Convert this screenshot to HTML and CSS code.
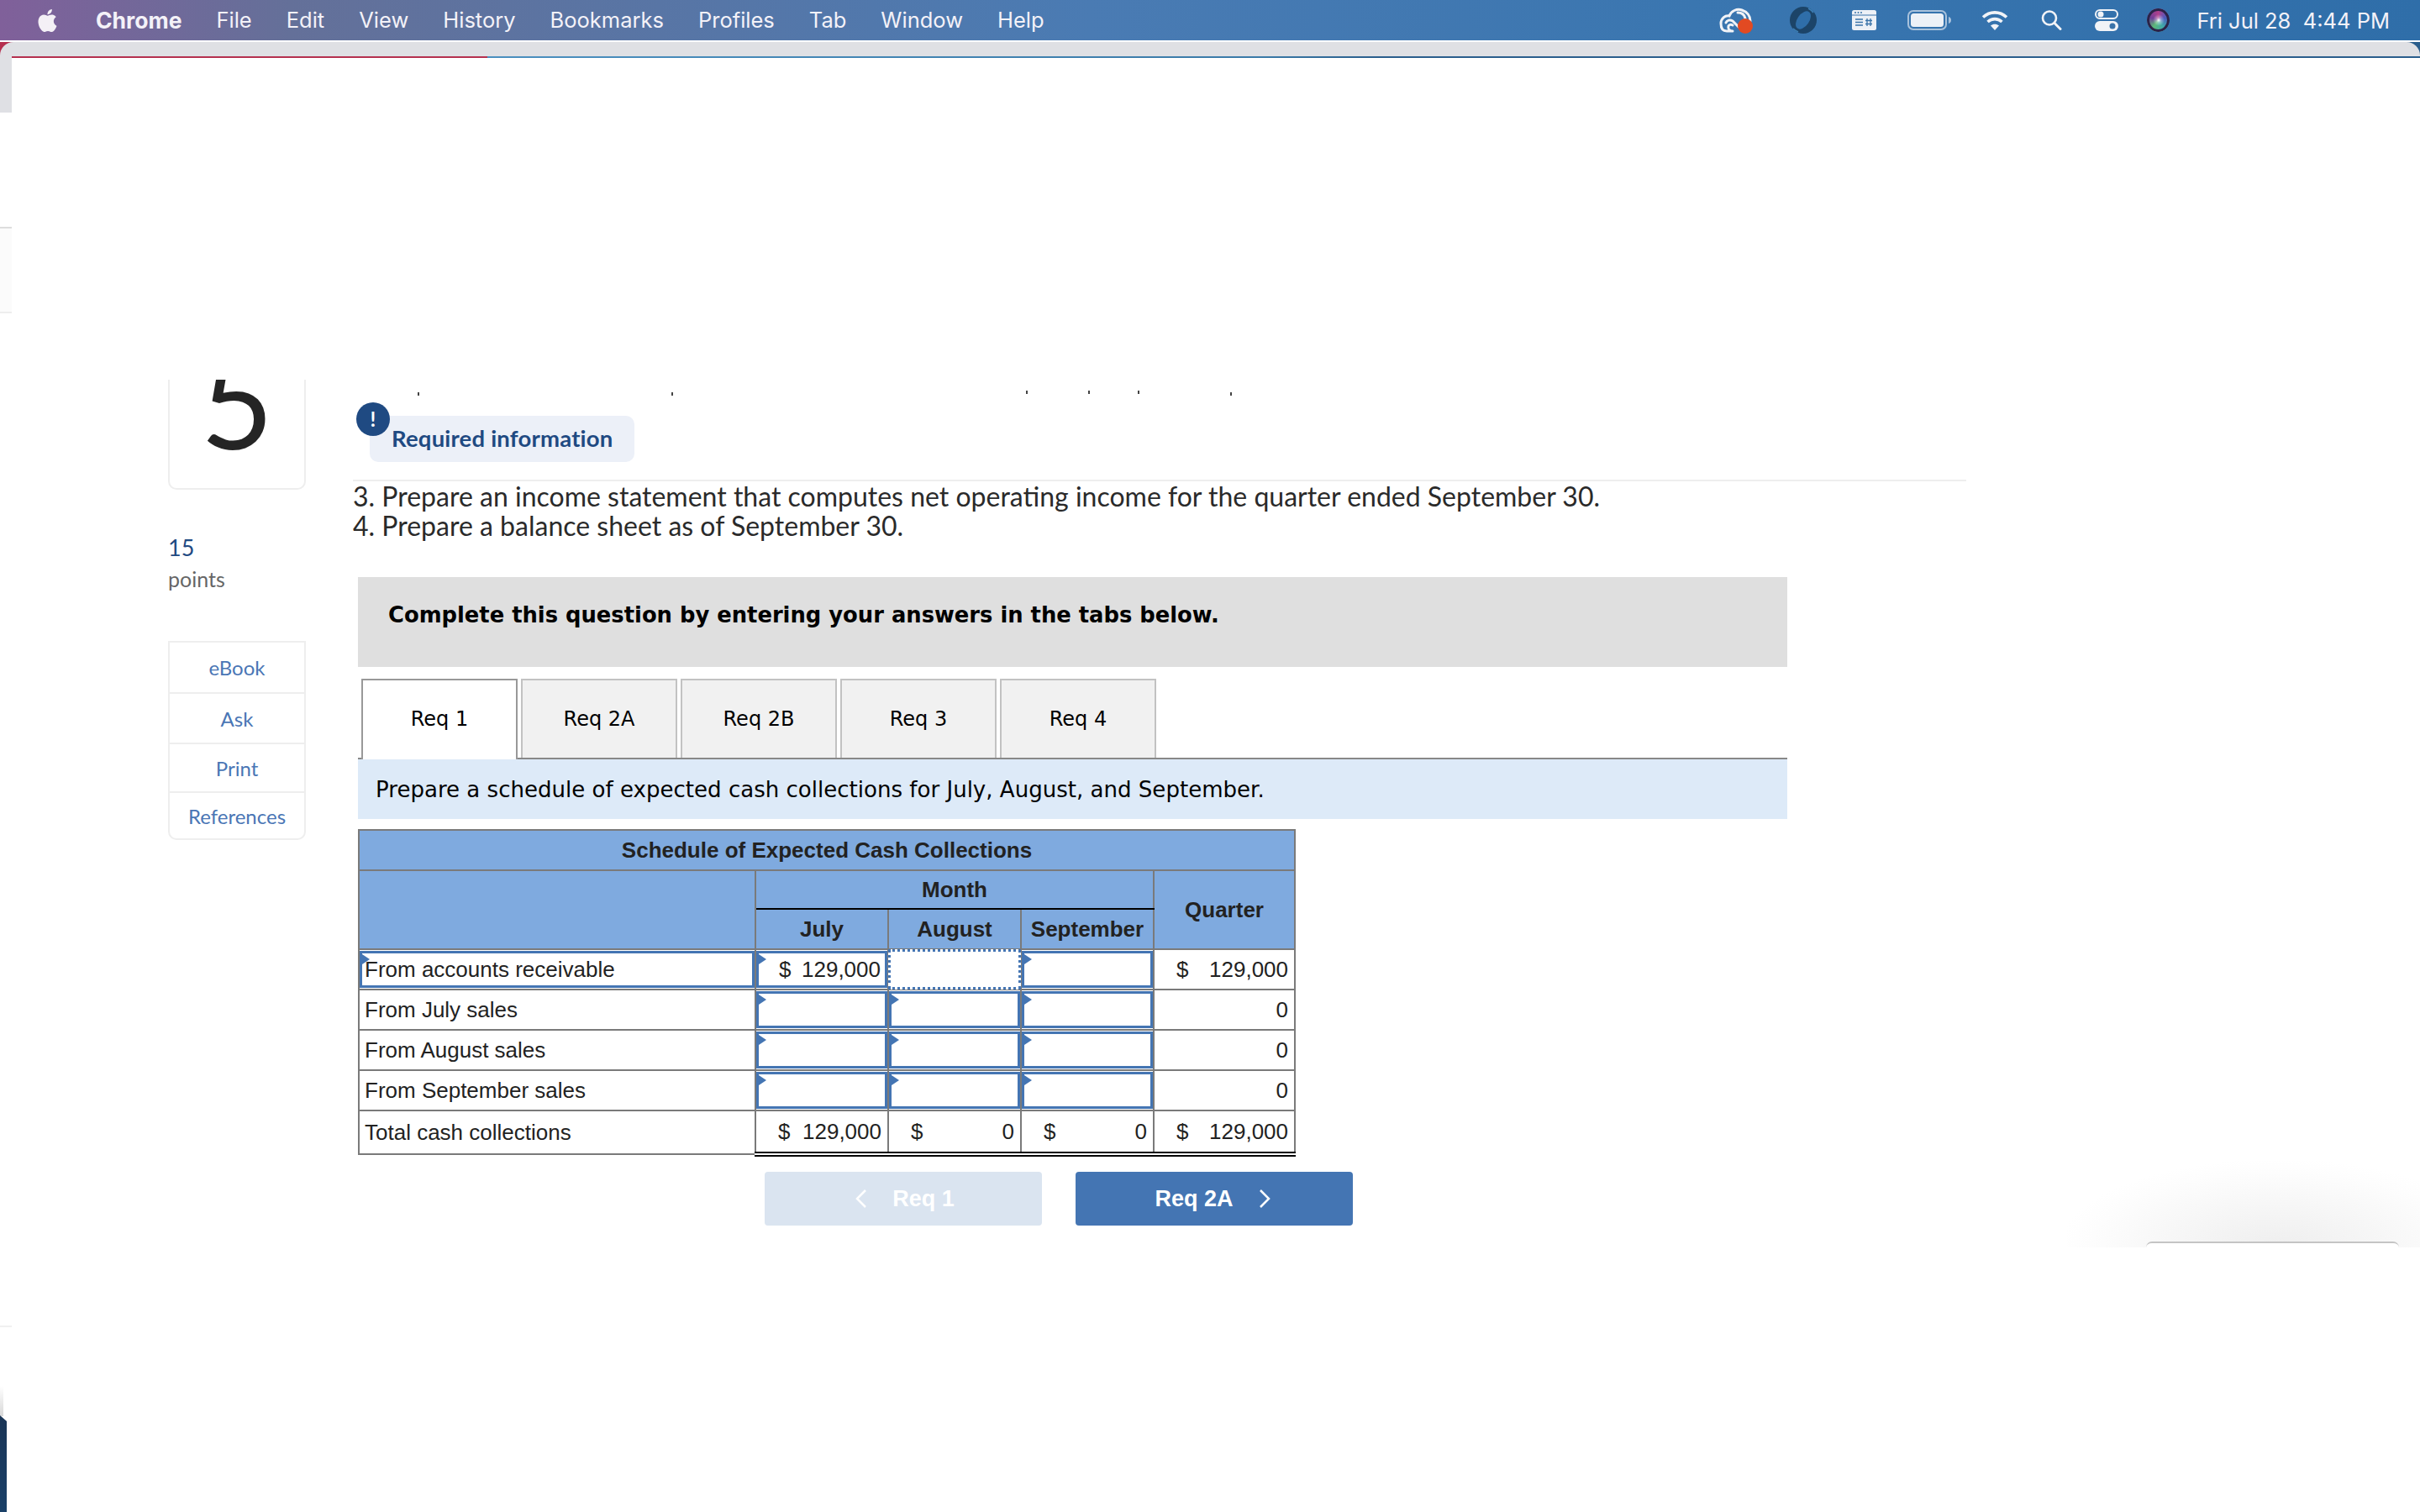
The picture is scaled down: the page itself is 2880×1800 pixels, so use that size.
FILE: index.html
```html
<!DOCTYPE html>
<html lang="en">

<head>
    <meta charset="UTF-8">
    <title>Required information</title>
    <link rel="stylesheet" href="styles.css">
</head>

<body>

    <!-- macOS menu bar -->
    <header class="menubar">
        <svg class="apple" viewBox="0 0 24 24"><path fill="#f4f0f6" d="M12.152 6.896c-.948 0-2.415-1.078-3.96-1.04-2.04.027-3.91 1.183-4.961 3.014-2.117 3.675-.546 9.103 1.519 12.09 1.013 1.454 2.208 3.09 3.792 3.039 1.52-.065 2.09-.987 3.935-.987 1.831 0 2.35.987 3.96.948 1.637-.026 2.676-1.48 3.676-2.948 1.156-1.688 1.636-3.325 1.662-3.415-.039-.013-3.182-1.221-3.22-4.857-.026-3.04 2.48-4.494 2.597-4.559-1.429-2.09-3.623-2.324-4.39-2.376-2-.156-3.675 1.09-4.61 1.09zM15.53 3.83c.843-1.012 1.4-2.427 1.245-3.83-1.207.052-2.662.805-3.532 1.818-.78.896-1.454 2.338-1.273 3.714 1.338.104 2.715-.688 3.559-1.701"/></svg>
        <nav class="menu">
            <span class="app-name">Chrome</span>
            <span>File</span>
            <span>Edit</span>
            <span>View</span>
            <span>History</span>
            <span>Bookmarks</span>
            <span>Profiles</span>
            <span>Tab</span>
            <span>Window</span>
            <span>Help</span>
        </nav>
        <div class="status">
            <svg class="ico-cloud" width="40" height="32" viewBox="0 0 40 32">
                <path fill="none" stroke="#f1f3f7" stroke-width="3" stroke-linecap="round" d="M14 29H9C4 29 2 25 2 20c0-6 5-10 10-9 2-6 9-9 15-7 6 2 10 7 10 13M8 19c1-3 5-4 8-2l7 7M16 29c-4 0-6-3-5-6 1-2 3-2 5-1M22 7c4 0 8 2 9 7"/>
                <circle cx="31" cy="23" r="9" fill="#e24a22"/>
            </svg>
            <svg class="ico-ring" width="32" height="32" viewBox="0 0 32 32">
                <circle cx="16" cy="16" r="16" fill="#1c4468"/>
                <ellipse cx="16" cy="16" rx="7" ry="12" transform="rotate(35 16 16)" fill="#2f6ea9"/>
                <path fill="none" stroke="#3d7fb5" stroke-width="1.500" d="M4 26C6 28 8 29 10 30M22 2c2 1 4 2 6 5"/>
            </svg>
            <svg class="ico-window" width="29" height="24" viewBox="0 0 29 24">
                <rect width="29" height="24" rx="2.5" fill="#edf1f7"/>
                <rect x="0" y="5.5" width="29" height="1" fill="#3a73a9"/>
                <circle cx="4" cy="3" r="1" fill="#3a73a9"/>
                <circle cx="7.5" cy="3" r="1" fill="#3a73a9"/>
                <circle cx="11" cy="3" r="1" fill="#3a73a9"/>
                <path stroke="#3a73a9" stroke-width="1.6" d="M4 11h9M4 14.5h9M4 18h9"/>
                <path fill="none" stroke="#3a73a9" stroke-width="1.3" d="M18 10v9M22 10v9M16 12.5h8M16 16.5h8"/>
            </svg>
            <svg class="ico-battery" width="52" height="24" viewBox="0 0 52 24">
                <rect x="1" y="1" width="45" height="22" rx="6" fill="none" stroke="#a9c2dc" stroke-width="2"/>
                <rect x="4" y="4" width="39" height="16" rx="3.5" fill="#edf1f7"/>
                <path fill="#a9c2dc" d="M49 8c2 .5 3 2 3 4s-1 3.500-3 4z"/>
            </svg>
            <svg class="ico-wifi" width="32" height="24" viewBox="0 0 32 24">
                <path fill="none" stroke="#f1f3f7" stroke-width="3.6" d="M2 8.500c8-7.500 20-7.500 28 0M7.500 14c5-4.500 12-4.500 17 0"/>
                <path fill="#f1f3f7" d="M11 18.500c3-2.500 7-2.500 10 0L16 24z"/>
            </svg>
            <svg class="ico-search" width="25" height="24" viewBox="0 0 25 24">
                <circle cx="10" cy="9.500" r="8" fill="none" stroke="#f1f3f7" stroke-width="2.6"/>
                <path stroke="#f1f3f7" stroke-width="3" stroke-linecap="round" d="M16 15.500l7 7"/>
            </svg>
            <svg class="ico-control" width="28" height="26" viewBox="0 0 28 26">
                <rect x="1" y="1" width="26" height="10" rx="5" fill="none" stroke="#f1f3f7" stroke-width="2"/>
                <circle cx="7" cy="6" r="3.500" fill="#f1f3f7"/>
                <rect x="0" y="14" width="28" height="12" rx="6" fill="#f1f3f7"/>
                <circle cx="21" cy="20" r="3.500" fill="#3a73a9"/>
            </svg>
            <div class="ico-siri"></div>
            <span class="clock">Fri Jul 28&nbsp;&nbsp;4:44 PM</span>
        </div>
    </header>

    <div class="chrome-top">
        <div class="chrome-strip"></div>
    </div>

    <!-- Bits of other windows at the screen edge -->
    <div class="edge edge-strip"></div>
    <div class="edge edge-box"></div>
    <div class="edge edge-line"></div>
    <div class="edge edge-fade"></div>
    <div class="edge edge-navy"></div>
    <div class="corner-shadow"><div class="corner-card"></div></div>

    <div class="page">

        <aside class="side">
            <div class="q-card"><span class="q-num">5</span></div>
            <div class="points-num">15</div>
            <div class="points-label">points</div>
            <ul class="side-links">
                <li class="link-ebook">eBook</li>
                <li class="link-ask">Ask</li>
                <li class="link-print">Print</li>
                <li class="link-refs">References</li>
            </ul>
        </aside>

        <main class="main">
            <div class="req-row">
                <div class="req-pill">
                    <span class="req-badge">!</span>
                    Required information
                </div>
            </div>

            <div class="steps">
                <p>3. Prepare an income statement that computes net operating income for the quarter ended September 30.</p>
                <p>4. Prepare a balance sheet as of September 30.</p>
            </div>

            <div class="work">
                <div class="notice">Complete this question by entering your answers in the tabs below.</div>

                <div class="tabs">
                    <div class="tab active">Req 1</div>
                    <div class="tab">Req 2A</div>
                    <div class="tab">Req 2B</div>
                    <div class="tab">Req 3</div>
                    <div class="tab">Req 4</div>
                </div>

                <div class="tab-intro">Prepare a schedule of expected cash collections for July, August, and September.</div>

                <table class="schedule">
                    <colgroup>
                        <col class="col-label">
                        <col class="col-month">
                        <col class="col-month">
                        <col class="col-month">
                        <col class="col-quarter">
                    </colgroup>
                    <thead>
                        <tr class="head-title">
                            <th colspan="5">Schedule of Expected Cash Collections</th>
                        </tr>
                        <tr class="head-month">
                            <th rowspan="2"></th>
                            <th colspan="3" class="month-cell">Month</th>
                            <th rowspan="2">Quarter</th>
                        </tr>
                        <tr class="head-sub">
                            <th>July</th>
                            <th>August</th>
                            <th>September</th>
                        </tr>
                    </thead>
                    <tbody>
                        <tr>
                            <td><div class="entry label-entry">From accounts receivable</div></td>
                            <td><div class="entry money"><span>$</span><span>129,000</span></div></td>
                            <td><div class="entry focused"></div></td>
                            <td><div class="entry"></div></td>
                            <td><div class="amount"><span>$</span><span>129,000</span></div></td>
                        </tr>
                        <tr>
                            <td class="label">From July sales</td>
                            <td><div class="entry"></div></td>
                            <td><div class="entry"></div></td>
                            <td><div class="entry"></div></td>
                            <td><div class="amount"><span></span><span>0</span></div></td>
                        </tr>
                        <tr>
                            <td class="label">From August sales</td>
                            <td><div class="entry"></div></td>
                            <td><div class="entry"></div></td>
                            <td><div class="entry"></div></td>
                            <td><div class="amount"><span></span><span>0</span></div></td>
                        </tr>
                        <tr>
                            <td class="label">From September sales</td>
                            <td><div class="entry"></div></td>
                            <td><div class="entry"></div></td>
                            <td><div class="entry"></div></td>
                            <td><div class="amount"><span></span><span>0</span></div></td>
                        </tr>
                        <tr class="total">
                            <td class="label">Total cash collections</td>
                            <td><div class="amount"><span>$</span><span>129,000</span></div></td>
                            <td><div class="amount"><span>$</span><span>0</span></div></td>
                            <td><div class="amount"><span>$</span><span>0</span></div></td>
                            <td><div class="amount"><span>$</span><span>129,000</span></div></td>
                        </tr>
                    </tbody>
                </table>

                <div class="pager">
                    <button class="pager-btn disabled" type="button">
                        <svg width="14" height="22" viewBox="0 0 14 22"><path fill="none" stroke="#fff" stroke-width="2.500" d="M12 1L2 11l10 10"/></svg>
                        Req 1
                    </button>
                    <button class="pager-btn next" type="button">
                        Req 2A
                        <svg width="14" height="22" viewBox="0 0 14 22"><path fill="none" stroke="#fff" stroke-width="2.500" d="M2 1l10 10L2 21"/></svg>
                    </button>
                </div>
            </div>
        </main>
    </div>

</body>

</html>
```

FILE: styles.css
```css
* {
    margin: 0;
    padding: 0;
    box-sizing: border-box;
}

body {
    position: relative;
    width: 2880px;
    height: 1800px;
    overflow: hidden;
    background-color: #fff;
    font-family: 'Lato', sans-serif;
    color: #222;
}

/* Menu bar */
.menubar {
    display: flex;
    align-items: center;
    height: 48px;
    padding: 0 36px 0 43px;
    background: linear-gradient(90deg, #80609a 0%, #647099 12%, #4a7bb3 45%, #3a76b0 70%, #2f6ea9 100%);
    color: #f4f2f8;
    font-family: 'Inter', sans-serif;
    font-size: 25.5px;
}

.apple {
    width: 27px;
    height: 31px;
    margin-right: 44px;
}

.menu {
    display: flex;
    gap: 41px;
}

.app-name {
    font-size: 26.5px;
    font-weight: 700;
}

.status {
    display: flex;
    align-items: center;
    margin-left: auto;
}

.ico-ring {
    margin-left: 44px;
}

.ico-window {
    margin-left: 42px;
}

.ico-battery {
    margin-left: 37px;
}

.ico-wifi {
    margin-left: 36px;
}

.ico-search {
    margin-left: 39px;
}

.ico-control {
    margin-left: 39px;
}

.ico-siri {
    width: 27px;
    height: 28px;
    margin-left: 34px;
    border-radius: 50%;
    background:
        radial-gradient(circle at 52% 50%, #fff 0%, rgba(255, 255, 255, 0.4) 14%, transparent 35%),
        conic-gradient(#b03f8c, #4a5cc0, #3fa8a8, #5cb878, #6f3f98, #b03f8c);
    box-shadow: inset 0 0 0 3px #2b2348;
}

.clock {
    margin-left: 32px;
}

/* Browser frame */
.chrome-top {
    height: 19px;
    background: linear-gradient(90deg, #b5304f 580px, #4a8fbf 580px, #3a7aa8 1500px, #2a5e8c 1640px);
}

.chrome-strip {
    height: 17px;
    margin-top: 2px;
    background-color: #dfe0e4;
    border-radius: 16px 16px 0 0;
}

.edge {
    position: absolute;
    left: 0;
    width: 14px;
}

.edge-strip {
    top: 67px;
    height: 67px;
    background-color: #dfe0e4;
}

.edge-box {
    top: 270px;
    height: 103px;
    background-color: #fbfbfb;
    border-top: 2px solid #ddd;
    border-bottom: 2px solid #eee;
}

.edge-line {
    top: 1578px;
    height: 2px;
    background-color: #f0f0f0;
}

.edge-fade {
    top: 1650px;
    width: 4px;
    height: 36px;
    background: linear-gradient(180deg, #fff, #d8d8d8);
}

.edge-navy {
    top: 1685px;
    width: 8px;
    height: 115px;
    background: linear-gradient(180deg, #1a3556, #1a4068);
    clip-path: polygon(0 0, 100% 7px, 100% 100%, 0 100%);
}

.corner-shadow {
    position: absolute;
    top: 1380px;
    right: 0;
    width: 420px;
    height: 105px;
    background: radial-gradient(ellipse 260px 105px at 250px 105px, #eeeeee 0%, #f6f6f6 45%, #fdfdfd 85%, #fff 100%);
}

.corner-card {
    position: absolute;
    left: 94px;
    bottom: 0;
    width: 301px;
    height: 7px;
    background-color: #fff;
    border-top: 2px solid #c4c4c4;
    border-radius: 8px 8px 0 0;
}

/* Page */
.page {
    display: flex;
    gap: 56px;
    padding: 383px 0 0 200px;
}

.side {
    width: 164px;
    flex-shrink: 0;
}

.q-card {
    height: 131px;
    overflow: hidden;
    text-align: center;
    border: 2px solid #eee;
    border-top: none;
    border-radius: 0 0 10px 10px;
}

.q-num {
    display: block;
    margin-top: -70px;
    font-size: 150px;
    line-height: 190px;
    color: #252525;
}

.points-num {
    margin-top: 54px;
    font-size: 27px;
    line-height: 30px;
    color: #1f4a82;
}

.points-label {
    margin-top: 7px;
    font-size: 25px;
    line-height: 30px;
    color: #666;
}

.side-links {
    list-style: none;
    margin-top: 59px;
    border: 2px solid #eee;
    border-radius: 0 0 10px 10px;
    color: #4a76b5;
    font-size: 24px;
    text-align: center;
}

.side-links li {
    display: flex;
    align-items: center;
    justify-content: center;
}

.side-links li + li {
    border-top: 2px solid #eee;
}

.link-ebook {
    height: 59px;
}

.link-ask {
    height: 60px;
}

.link-print {
    height: 58px;
}

.link-refs {
    height: 56px;
}

.main {
    width: 1920px;
}

/* The clipped text of the question leaves these specks behind */
.req-row {
    height: 121px;
    padding: 43px 0 0 20px;
    border-bottom: 2px solid #eee;
    background-image:
        linear-gradient(#444, #444), linear-gradient(#444, #444), linear-gradient(#444, #444),
        linear-gradient(#444, #444), linear-gradient(#444, #444), linear-gradient(#444, #444);
    background-repeat: no-repeat;
    background-size: 2px 4px;
    background-position: 77px 15px, 379px 15px, 801px 13px, 875px 13px, 934px 13px, 1044px 15px;
}

.req-pill {
    position: relative;
    width: 315px;
    height: 55px;
    padding: 11px 0 0 26px;
    background-color: #ecf0f8;
    border-radius: 10px;
    color: #1f4a82;
    font-size: 27.5px;
    font-weight: 700;
    line-height: 32px;
    letter-spacing: 0.2px;
}

.req-badge {
    position: absolute;
    top: -16px;
    left: -16px;
    width: 40px;
    height: 40px;
    background-color: #1f4a82;
    border-radius: 50%;
    color: #fff;
    font-size: 24px;
    line-height: 40px;
    text-align: center;
}

.steps {
    font-size: 32px;
    line-height: 35px;
    color: #2a2a2a;
}

.work {
    width: 1701px;
    margin: 44px 0 0 6px;
    font-family: 'DejaVu Sans', sans-serif;
}

.notice {
    height: 107px;
    padding: 29px 0 0 36px;
    background-color: #dfdfdf;
    color: #000;
    font-size: 25.8px;
    font-weight: 700;
    line-height: 32px;
}

/* Tabs */
.tabs {
    display: flex;
    gap: 4px;
    height: 96px;
    margin-top: 14px;
    padding-left: 4px;
    border-bottom: 2px solid #888;
}

.tab {
    width: 186px;
    height: 94px;
    background-color: #f1f1f1;
    border: 2px solid #c2c2c2;
    border-bottom: none;
    color: #000;
    font-size: 24px;
    line-height: 93px;
    text-align: center;
}

.tab.active {
    height: 96px;
    background-color: #fff;
    border-color: #999;
}

.tab-intro {
    height: 71px;
    padding-left: 21px;
    background-color: #ddeaf8;
    color: #000;
    font-size: 26.05px;
    line-height: 73px;
}

/* Schedule table */
.schedule {
    width: 1116px;
    margin-top: 12px;
    table-layout: fixed;
    border-collapse: collapse;
    font-family: 'Liberation Sans', sans-serif;
    font-size: 26px;
    color: #222;
}

.col-label {
    width: 472px;
}

.col-month {
    width: 158px;
}

.col-quarter {
    width: 168px;
}

.schedule th,
.schedule td {
    border: 2px solid #7a7a7a;
    padding: 0;
}

.schedule th {
    background-color: #7faadf;
    font-weight: 700;
    text-align: center;
}

.head-title th {
    height: 48px;
}

.head-month th {
    height: 46px;
}

.head-sub th {
    height: 48px;
}

.schedule th.month-cell {
    border-bottom-color: #000;
}

.schedule tbody tr {
    height: 48px;
}

.schedule td.label {
    padding-left: 6px;
}

.entry {
    position: relative;
    height: 44px;
    border: 3px solid #4475b3;
    background-color: #fff;
}

.entry::before {
    content: '';
    position: absolute;
    top: -1px;
    left: -3px;
    border-top: 8px solid transparent;
    border-bottom: 8px solid transparent;
    border-left: 12px solid #4475b3;
}

.label-entry {
    padding-left: 3px;
    line-height: 38px;
}

.money {
    display: flex;
    justify-content: space-between;
    padding: 0 5px 0 24px;
    line-height: 38px;
}

.focused {
    z-index: 1;
    height: 48px;
    margin: -2px -1px;
    border-style: dotted;
}

.focused::before {
    display: none;
}

.amount {
    display: flex;
    justify-content: space-between;
    padding: 0 7px 0 26px;
    line-height: 44px;
}

.total td {
    height: 52px;
    border-top-color: #000;
    border-bottom: 6px double #000;
}

.schedule .total td.label {
    border-top-color: #7a7a7a;
    border-bottom: 2px solid #7a7a7a;
}

/* Pager */
.pager {
    display: flex;
    gap: 40px;
    margin: 18px 0 0 484px;
}

.pager-btn {
    display: flex;
    align-items: center;
    justify-content: center;
    gap: 30px;
    width: 330px;
    height: 64px;
    padding-left: 4px;
    background-color: #4475b3;
    border: none;
    border-radius: 4px;
    color: #fff;
    font-family: 'Liberation Sans', sans-serif;
    font-size: 27px;
    font-weight: 700;
}

.pager-btn.next {
    padding: 0 4px 0 0;
}

.pager-btn.disabled {
    background-color: #dae4f0;
}
```
